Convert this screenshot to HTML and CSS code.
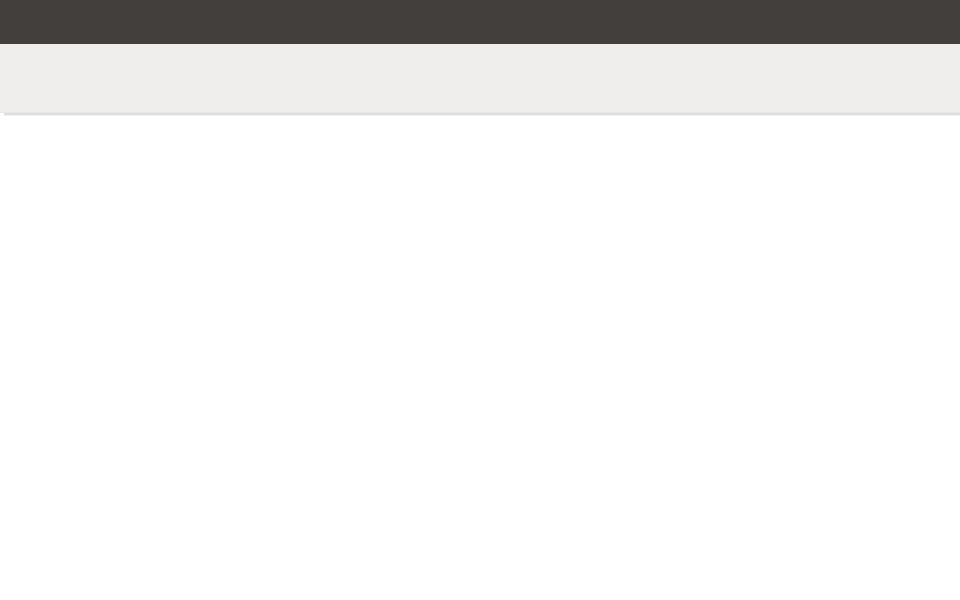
FILE: index.html
```html
<!DOCTYPE html>
<html lang="en">
<head>
<meta charset="utf-8">
<title>Page</title>
<link rel="stylesheet" href="styles.css">
</head>
<body>
<header class="topbar"></header>
<div class="toolbar"></div>
<div class="rule"></div>
<main class="content"></main>
</body>
</html>
```
FILE: styles.css
```css
html, body {
  margin: 0;
  padding: 0;
  background: #ffffff;
  font-family: "Liberation Sans", Arial, sans-serif;
}
.topbar {
  height: 44px;
  background: #433f3d;
}
.toolbar {
  height: 68px;
  background: #efeeec;
  border-bottom: 1px solid #e8e7e5;
}
.rule {
  height: 2px;
  margin-left: 4px;
  background: #e0dedb;
  border-bottom: 1px solid #f4f3f2;
}
.content {
  height: 484px;
  background: #ffffff;
}
```
